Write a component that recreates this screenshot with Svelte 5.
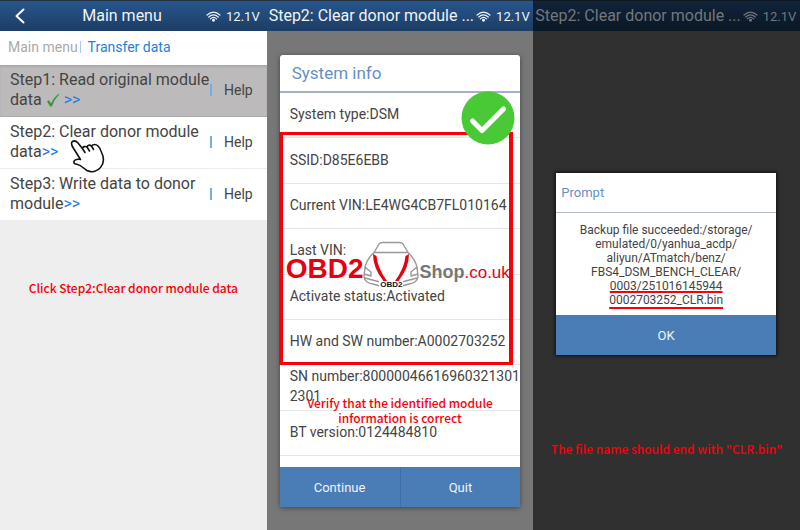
<script lang="ts">
  type Step = { title: string; done: boolean; state: 'past' | 'open' };

  const steps: Step[] = [
    { title: 'Step1: Read original module data', done: true, state: 'past' },
    { title: 'Step2: Clear donor module data', done: false, state: 'open' },
    { title: 'Step3: Write data to donor module', done: false, state: 'open' },
  ];

  const info = [
    'System type:DSM',
    'SSID:D85E6EBB',
    'Current VIN:LE4WG4CB7FL010164',
    'Last VIN:',
    'Activate status:Activated',
    'HW and SW number:A0002703252',
    'SN number:800000466169603213012301',
    'BT version:0124484810',
  ];

  const pathLines = [
    'Backup file succeeded:/storage/',
    'emulated/0/yanhua_acdp/',
    'aliyun/ATmatch/benz/',
    'FBS4_DSM_BENCH_CLEAR/',
  ];
  const fileLines = ['0003/251016145944', '0002703252_CLR.bin'];
</script>

{#snippet status()}
  <span class="status">
    <svg class="wifi" viewBox="0 0 16 12" aria-hidden="true">
      <path d="M1 4.4Q8-1.8 15 4.4M2.8 6.6Q8 1.8 13.2 6.6M4.6 8.6Q8 5.4 11.4 8.6" />
      <circle cx="8" cy="10" r="1.6" />
    </svg>
    <span>12.1V</span>
  </span>
{/snippet}

<main>
  <section class="screen menu">
    <header>
      <button class="back" aria-label="Back">
        <svg viewBox="0 0 10 16" aria-hidden="true"><path d="M8.5 1.5 1.5 8l7 6.5" /></svg>
      </button>
      <h1 class="center">Main menu</h1>
      {@render status()}
    </header>
    <nav>
      <a class="root" href="#main">Main menu</a>
      <i></i>
      <a href="#transfer">Transfer data</a>
    </nav>
    <ul>
      {#each steps as step, i}
        <li class={step.state}>
          <button class="step">
            {step.title}{#if step.done}
              <svg class="tick" viewBox="0 0 14 14" aria-hidden="true">
                <path d="M1 8.5 3 7.2 5 10.6Q8 4 13 .5L13.4 1Q8.4 6 5.8 13.5H4.2Z" />
              </svg>
            {/if}<b>&gt;&gt;</b>
          </button>
          <i></i>
          <button class="help">Help</button>
          {#if i === 1}
            <svg class="hand" viewBox="0 0 36 36" aria-hidden="true">
              <path
                d="M2.5 1.5C.5 3 1.5 5 3 7.5L10.5 19.5C8 19 4.5 19.5 4 21.5C3.6 23.5 5 24 7 24.2C11 25 13 28 17 30.5C22 33 27 31 30.5 27.5C34.5 23 34 17 31 11C29.5 7 27.5 4.5 24.5 4.5C23 4.5 22.2 5.2 21.5 6C19.5 4.5 17.5 5 17 7C15 6 13 6.5 12.4 8.5L8 3C6 .8 4 .5 2.5 1.5ZM12.4 8.5 15 12.5M17 7 19.5 11M21.5 6 23.5 9.5"
              />
            </svg>
          {/if}
        </li>
      {/each}
    </ul>
    <p class="caption">Click Step2:Clear donor module data</p>
  </section>

  <section class="screen system">
    <header>
      <h1>Step2: Clear donor module ...</h1>
      {@render status()}
    </header>
    <div class="dialog" role="dialog" aria-label="System info">
      <h2>System info</h2>
      <ul>
        {#each info as line}
          <li>{line}</li>
        {/each}
      </ul>
      <footer>
        <button>Continue</button>
        <button>Quit</button>
      </footer>

      <div class="frame"></div>
      <svg class="ok-badge" viewBox="0 0 54 54" aria-hidden="true">
        <circle cx="27" cy="27" r="26.5" />
        <path d="M11.5 30 21 39.5 42.5 18" />
      </svg>
      <div class="logo">
        <strong>OBD2</strong>
        <div class="car">
          <svg viewBox="0 0 56 48" aria-hidden="true">
            <path
              class="body"
              d="M11 11.5 16 3Q17 1.5 20 1.5H36Q39 1.5 40 3L45 11.5M11 11.5H45M11 11.5Q4 18 2 26L1 36Q2 42 10 43L17 45H39L46 43Q54 42 55 36L54 26Q52 18 45 11.5M2 26 8 31V35L1 33M54 26 48 31V35L55 33M2 37 17 41M54 37 39 41"
            />
            <path class="stripe" d="M10 13Q10 27 20.5 40L24 40Q14.5 27 13.5 15ZM46 13Q46 27 35.5 40L32 40Q41.5 27 42.5 15Z" />
          </svg>
          <small>OBD2</small>
        </div>
        <em>Shop</em><span>.co.uk</span>
      </div>
      <p class="caption">Verify that the identified module information is correct</p>
    </div>
  </section>

  <section class="screen backup">
    <header>
      <h1>Step2: Clear donor module ...</h1>
      {@render status()}
    </header>
    <div class="prompt" role="dialog" aria-label="Prompt">
      <h2>Prompt</h2>
      <div class="message">
        {#each pathLines as line}
          <span>{line}</span>
        {/each}
        {#each fileLines as line}
          <span class="file">{line}</span>
        {/each}
      </div>
      <button>OK</button>
    </div>
    <p class="caption">The file name should end with "CLR.bin"</p>
  </section>
</main>

<style>
  :global(body) {
    margin: 0;
    background: #efeeee;
  }
  main {
    display: grid;
    grid-template-columns: repeat(3, minmax(0, 1fr));
    min-height: 100vh;
    font-family: Roboto, 'Noto Sans', sans-serif;
    font-size: 16px;
    color: #444;
  }
  h1,
  h2,
  p,
  ul {
    margin: 0;
    padding: 0;
    font-weight: 400;
    list-style: none;
  }
  button {
    padding: 0;
    border: 0;
    background: none;
    font: inherit;
    color: inherit;
    cursor: pointer;
  }
  svg {
    display: block;
    fill: none;
    stroke-linecap: round;
    stroke-linejoin: round;
  }

  .screen {
    display: flex;
    flex-direction: column;
    min-width: 0;
  }
  header {
    display: flex;
    align-items: center;
    gap: 2px;
    box-sizing: border-box;
    height: 31px;
    padding: 0 7px 0 2px;
    border-top: 1px solid #26323f;
    background: linear-gradient(#27568d, #1d3d64);
    color: #f0f3f7;
  }
  h1 {
    flex: 1;
    font-size: 16px;
    line-height: 24px;
    white-space: nowrap;
  }
  .center {
    text-align: center;
  }
  .back {
    width: 36px;
  }
  .back svg {
    width: 10px;
    height: 16px;
    margin: 0 auto;
    stroke: #fff;
    stroke-width: 2;
  }
  .status {
    display: flex;
    align-items: center;
    gap: 5px;
    font-size: 13px;
  }
  .wifi {
    width: 15px;
    height: 11px;
    stroke: currentColor;
    stroke-width: 1.3;
  }
  .wifi circle {
    fill: currentColor;
    stroke: none;
  }
  .caption {
    font-family: 'Noto Sans CJK SC', sans-serif;
    font-size: 12px;
    font-weight: 500;
    line-height: 15px;
    color: #f8000a;
    text-align: center;
  }

  .menu {
    background: #efeeee;
  }
  nav {
    display: flex;
    align-items: center;
    box-sizing: border-box;
    height: 34px;
    padding: 0 0 2px 8px;
    background: #fff;
    font-size: 14px;
  }
  nav a {
    color: #1f80dc;
    text-decoration: none;
  }
  nav .root {
    color: #aaa;
  }
  nav i {
    width: 1px;
    height: 12px;
    margin: 0 7px 0 2px;
    background: #a9cbe8;
  }
  .menu li {
    position: relative;
    display: flex;
    align-items: center;
    box-sizing: border-box;
    height: 52px;
    padding: 0 14px 2px 10px;
    border-bottom: 1px solid #ececec;
    background: #fff;
  }
  .menu li.past {
    border-color: #aaa;
    background: #bcbaba;
    box-shadow: inset 0 2px 2px #aaa;
  }
  .step {
    flex: 1;
    line-height: 20px;
    text-align: left;
  }
  .step b {
    font-weight: 400;
    color: #1f80dc;
  }
  .tick {
    display: inline-block;
    width: 14px;
    height: 14px;
    margin: 0 4px;
    vertical-align: -2px;
    fill: #2d9a3a;
  }
  .menu li i {
    width: 2px;
    height: 12px;
    margin-right: 12px;
    background: #6fb0e6;
  }
  .help {
    font-size: 14px;
  }
  .hand {
    position: absolute;
    top: 23px;
    left: 70px;
    width: 36px;
    height: 36px;
    z-index: 1;
    fill: #fff;
    stroke: #111;
    stroke-width: 1.6;
  }
  .menu .caption {
    margin-top: 59px;
  }

  .system {
    background: #777;
  }
  .dialog {
    position: relative;
    display: flex;
    flex: 1;
    flex-direction: column;
    margin: 24px 13px 23px;
    border-radius: 3px;
    background: #fff;
    box-shadow: 0 1px 5px #444;
  }
  .dialog h2 {
    height: 36px;
    padding-left: 12px;
    border-bottom: 2px solid #a3b1c4;
    font-size: 17px;
    line-height: 36px;
    color: #6690c4;
  }
  .dialog ul {
    display: flex;
    flex: 1;
    flex-direction: column;
    padding-bottom: 11px;
  }
  .dialog li {
    display: flex;
    flex: 1;
    align-items: center;
    padding: 0 0 2px 10px;
    border-bottom: 1px solid #e6e6e6;
    font-size: 14px;
    line-height: 20px;
    word-break: break-all;
  }
  footer {
    display: flex;
    height: 40px;
  }
  footer button {
    flex: 1;
    background: #4a7db5;
    color: #f0f3f7;
    font-size: 13px;
  }
  footer button + button {
    border-left: 1px solid #3e6ea5;
  }
  .frame {
    position: absolute;
    top: 77px;
    right: 7px;
    left: -1px;
    height: 227px;
    border: solid #f8000a;
    border-width: 3px 4px;
  }
  .ok-badge {
    position: absolute;
    top: 36px;
    right: 5px;
    width: 54px;
    height: 54px;
    fill: #4ac936;
  }
  .ok-badge path {
    fill: none;
    stroke: #fff;
    stroke-width: 5;
  }
  .logo {
    position: absolute;
    top: 186px;
    left: 6px;
    display: flex;
    align-items: baseline;
    height: 48px;
    font-family: 'Liberation Sans', sans-serif;
    line-height: 56px;
    white-space: nowrap;
  }
  .logo strong {
    font-size: 28px;
    color: #e60012;
  }
  .logo em {
    font-size: 18px;
    font-style: normal;
    font-weight: 700;
    color: #777;
  }
  .logo > span {
    font-size: 17px;
    color: #e60012;
  }
  .car {
    position: relative;
    align-self: flex-start;
  }
  .car svg {
    width: 56px;
    height: 48px;
  }
  .body {
    fill: #fff;
    stroke: #999;
    stroke-width: 1.4;
  }
  .stripe {
    fill: #e60012;
  }
  .car small {
    position: absolute;
    right: 16px;
    bottom: 0;
    left: 16px;
    background: #fff;
    font-size: 8px;
    font-weight: 700;
    line-height: 8px;
    color: #111;
    text-align: center;
  }
  .dialog .caption {
    position: absolute;
    top: 340px;
    right: 24px;
    left: 24px;
  }

  .backup {
    background: #303030;
  }
  .backup header {
    border-color: #101820;
    background: linear-gradient(#10233a, #0b1826);
    color: #73777c;
  }
  .prompt {
    display: flex;
    flex-direction: column;
    margin: 142px 24px 0 23px;
    background: #fff;
    box-shadow: 0 0 3px 1px #111;
  }
  .prompt h2 {
    height: 39px;
    padding-left: 5px;
    border-bottom: 1px solid #b4bcc6;
    font-size: 13px;
    line-height: 40px;
    color: #6690c4;
  }
  .message {
    display: flex;
    flex-direction: column;
    align-items: center;
    padding: 10px 0 8px;
    font-size: 12px;
    line-height: 14px;
  }
  .file {
    text-decoration: underline 2px #f8000a;
    text-decoration-skip-ink: none;
    text-underline-offset: 1px;
  }
  .file:last-child {
    text-underline-offset: 3px;
  }
  .prompt button {
    height: 40px;
    background: #4a7db5;
    color: #f0f3f7;
    font-size: 13px;
  }
  .backup .caption {
    margin-top: 86px;
  }
</style>
